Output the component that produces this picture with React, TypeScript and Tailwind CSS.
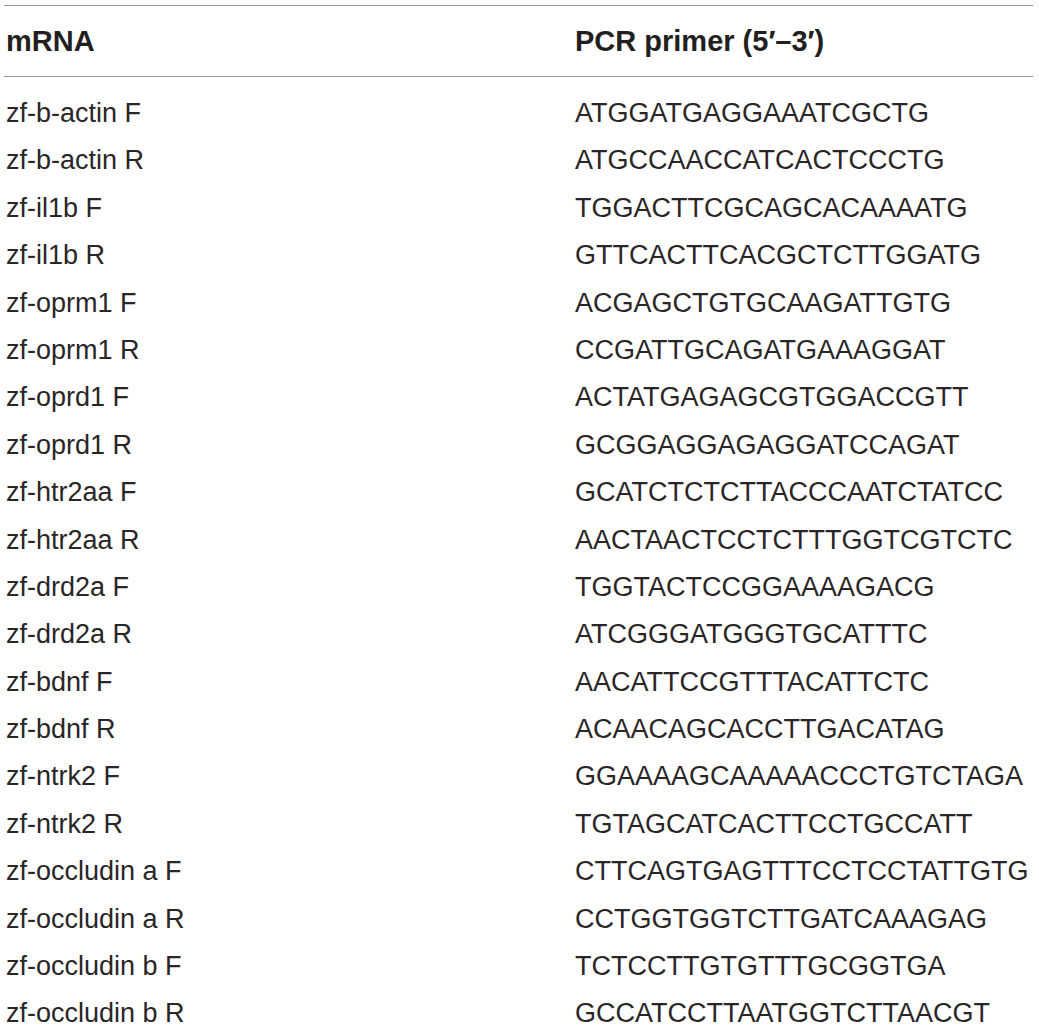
import React from "react";

const rows: [string, string][] = [
  ["zf-b-actin F", "ATGGATGAGGAAATCGCTG"],
  ["zf-b-actin R", "ATGCCAACCATCACTCCCTG"],
  ["zf-il1b F", "TGGACTTCGCAGCACAAAATG"],
  ["zf-il1b R", "GTTCACTTCACGCTCTTGGATG"],
  ["zf-oprm1 F", "ACGAGCTGTGCAAGATTGTG"],
  ["zf-oprm1 R", "CCGATTGCAGATGAAAGGAT"],
  ["zf-oprd1 F", "ACTATGAGAGCGTGGACCGTT"],
  ["zf-oprd1 R", "GCGGAGGAGAGGATCCAGAT"],
  ["zf-htr2aa F", "GCATCTCTCTTACCCAATCTATCC"],
  ["zf-htr2aa R", "AACTAACTCCTCTTTGGTCGTCTC"],
  ["zf-drd2a F", "TGGTACTCCGGAAAAGACG"],
  ["zf-drd2a R", "ATCGGGATGGGTGCATTTC"],
  ["zf-bdnf F", "AACATTCCGTTTACATTCTC"],
  ["zf-bdnf R", "ACAACAGCACCTTGACATAG"],
  ["zf-ntrk2 F", "GGAAAAGCAAAAACCCTGTCTAGA"],
  ["zf-ntrk2 R", "TGTAGCATCACTTCCTGCCATT"],
  ["zf-occludin a F", "CTTCAGTGAGTTTCCTCCTATTGTG"],
  ["zf-occludin a R", "CCTGGTGGTCTTGATCAAAGAG"],
  ["zf-occludin b F", "TCTCCTTGTGTTTGCGGTGA"],
  ["zf-occludin b R", "GCCATCCTTAATGGTCTTAACGT"],
];

export default function App() {
  return (
    <div
      className="w-[1039px] h-[1028px] bg-white overflow-hidden text-[#2a2627]"
      style={{ fontFamily: '"Liberation Sans", Arial, sans-serif' }}
    >
      <div className="ml-[4px] mt-[5px] w-[1029px]">
        <div className="border-t border-b border-[#9a9a9a] h-[72px] pt-[19px] pl-[2px] grid grid-cols-[569px_1fr] text-[29px] leading-[33px] font-bold text-[#231f20]">
          <div>mRNA</div>
          <div>PCR primer (5′–3′)</div>
        </div>
        <div className="pt-[13px] pl-[2px] text-[27px] leading-[47.4px]">
          {rows.map(([a, b]) => (
            <div key={a} className="grid grid-cols-[569px_1fr] h-[47.4px] whitespace-nowrap">
              <div>{a}</div>
              <div>{b}</div>
            </div>
          ))}
        </div>
      </div>
    </div>
  );
}
